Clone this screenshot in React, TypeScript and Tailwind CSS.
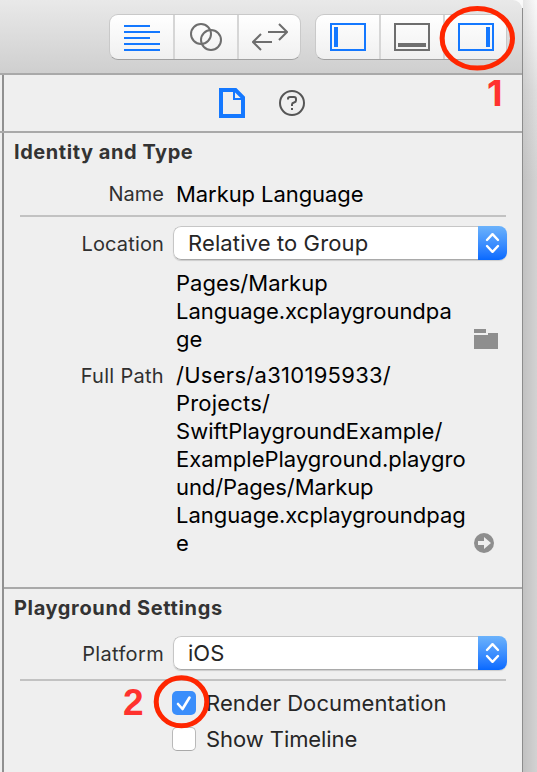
import React from "react";

function Popup({ children }: { children: React.ReactNode }) {
  return (
    <div className="flex h-[34px] w-[334px] overflow-hidden rounded-[8px] shadow-[0_1px_1px_rgba(0,0,0,0.15)]">
      <div className="flex flex-1 items-center rounded-l-[8px] border border-r-0 border-[#c6c6c6] border-b-[#a9a9a9] bg-white pl-[14px] text-[22px] leading-[28px] text-[#262626]">
        {children}
      </div>
      <div className="flex w-[29px] items-center justify-center bg-linear-to-b from-[#6bb2fb] to-[#0669ff]">
        <svg width="29" height="34" viewBox="0 0 29 34" fill="none" stroke="white" strokeWidth="2.4" strokeLinecap="round" strokeLinejoin="round">
          <path d="M9 14 L14.5 8.2 L20 14 M9 20 L14.5 25.8 L20 20" />
        </svg>
      </div>
    </div>
  );
}

function Label({ children }: { children: React.ReactNode }) {
  return (
    <div className="w-[164px] shrink-0 text-right text-[20px] leading-[28px] text-[#303030]">
      {children}
    </div>
  );
}

const group =
  "flex h-[46px] w-[192px] divide-x-2 divide-[#d6d6d6] rounded-[9px] border border-[#c9c9c9] border-b-[#a0a0a0] bg-linear-to-b from-white to-[#f0f0f0]";
const first = "flex w-[65px] items-center justify-center pl-px";
const middle = "flex w-[64px] items-center justify-center";
const last = "flex w-[61px] items-center justify-center pl-px";

export default function App() {
  return (
    <div className="relative flex h-[772px] w-[537px] overflow-hidden bg-[#efefef] font-['Inter','Liberation_Sans',sans-serif] whitespace-nowrap">
      <div className="flex w-[522px] flex-col bg-[#fafafa]">
        <header className="flex h-[75px] shrink-0 rounded-tr-[9px] border-b-2 border-[#a9a9a9] bg-linear-to-b from-[#e9e9e9] to-[#cfcfcf] pt-[14px] pl-[109px]">
          <div className={group}>
            <div className={first}>
              <svg className="mt-[2px]" width="36" height="28" viewBox="0 0 36 28" fill="#1478ff">
                <path d="M0 1h26v2H0zM0 7h36v2H0zM0 13h26v2H0zM0 19h36v2H0zM0 25h36v2H0z" />
              </svg>
            </div>
            <div className={middle}>
              <svg width="32" height="28" viewBox="0 0 32 28" fill="none" stroke="#6e6e6e" strokeWidth="2">
                <circle cx="11" cy="11" r="10" />
                <circle cx="21" cy="17" r="10" />
              </svg>
            </div>
            <div className={last}>
              <svg width="36" height="28" viewBox="0 0 36 28" fill="none" stroke="#6e6e6e" strokeWidth="2">
                <path d="M16 9h19M27 1l8 8-8 8M20 19H1M9 11l-8 8 8 8" />
              </svg>
            </div>
          </div>
          <div className={"ml-[14px] " + group}>
            <div className={first}>
              <svg width="36" height="28" fill="none" stroke="#1478ff" strokeWidth="2">
                <path d="M1 1h34v26H1z" />
                <path d="M6 4v20" strokeWidth="4" />
              </svg>
            </div>
            <div className={middle}>
              <svg width="36" height="28" fill="none" stroke="#6e6e6e" strokeWidth="2">
                <path d="M1 1h34v26H1z" />
                <path d="M4 22h28" strokeWidth="4" />
              </svg>
            </div>
            <div className={last}>
              <svg width="36" height="28" fill="none" stroke="#1478ff" strokeWidth="2">
                <path d="M1 1h34v26H1z" />
                <path d="M30 4v20" strokeWidth="4" />
              </svg>
            </div>
          </div>
        </header>

        <main className="flex flex-1 flex-col border-l-2 border-[#efefef] bg-[#efefef]">
          <div className="flex flex-1 flex-col border-l-2 border-[#909090]">
            <nav className="-ml-[4px] flex h-[58px] shrink-0 border-b-2 border-[#a9a9a9] pt-[13px] pl-[219px]">
              <svg width="26" height="30" viewBox="0 0 26 30" fill="none" stroke="#1478ff">
                <path d="M2 2h14.5L24 9.5V28H2z" strokeWidth="4" />
                <path d="M15 4v7h7" strokeWidth="2" />
              </svg>
              <svg className="mt-[2px] ml-[34px]" width="26" height="26" viewBox="0 0 26 26" fill="none" stroke="#555" strokeWidth="2">
                <circle cx="13" cy="13" r="12" />
                <path d="M9 9.5V8.8Q9 7 11 7h4Q17 7 17 9v1.5Q17 12 15 12.5T13 14.5V16" />
                <path d="M13 18v2" />
              </svg>
            </nav>

            <section className="-ml-[4px] flex h-[454px] shrink-0 flex-col">
              <h2 className="mt-[5px] pl-[14px] text-[20px] leading-[28px] font-bold tracking-[0.55px] text-[#333]">
                Identity and Type
              </h2>
              <div className="mt-[14px] flex">
                <Label>Name</Label>
                <div className="ml-[12px] text-[22px] leading-[28px] tracking-[-0.07px]">Markup Language</div>
              </div>
              <div className="mt-[7px] ml-[20px] h-[2px] w-[486px] shrink-0 bg-[#c2c2c2]" />
              <div className="mt-[9px] flex items-center">
                <div className="pt-[2px]"><Label><span className="tracking-[0.15px]">Location</span></Label></div>
                <div className="ml-[9px]">
                  <Popup><span className="tracking-[0.12px]">Relative to Group</span></Popup>
                </div>
              </div>
              <div className="mt-[9px] flex pl-[176px] text-[22px] leading-[28px]">
                <div className="w-[298px]">
                  <div>Pages/Markup</div>
                  <div className="tracking-[-0.02px]">Language.xcplaygroundpa</div>
                  <div>ge</div>
                </div>
                <svg className="mt-[60px]" width="24" height="20" fill="#8e8e8e">
                  <path d="M0 0h12v4H0zM0 6h14V4h10v16H0z" />
                </svg>
              </div>
              <div className="mt-[8px] flex">
                <div className="pt-px"><Label><span className="tracking-[0.3px]">Full Path</span></Label></div>
                <div className="ml-[12px] w-[298px] text-[22px] leading-[28px]">
                  <div className="tracking-[0.28px]">/Users/a310195933/</div>
                  <div className="tracking-[0.2px]">Projects/</div>
                  <div className="tracking-[0.02px]">SwiftPlaygroundExample/</div>
                  <div>ExamplePlayground.playgro</div>
                  <div className="tracking-[-0.1px]">und/Pages/Markup</div>
                  <div>Language.xcplaygroundpag</div>
                  <div>e</div>
                </div>
                <svg className="mt-[172px]" width="20" height="20">
                  <circle cx="10" cy="10" r="10" fill="#8e8e8e" />
                  <path d="M4 8h6V4l7 6-7 6v-4H4z" fill="#efefef" />
                </svg>
              </div>
            </section>

            <section className="flex flex-1 flex-col border-t-2 border-[#a9a9a9]">
              <h2 className="mt-[5px] pl-[10px] text-[20px] leading-[28px] font-bold tracking-[0.63px] text-[#333]">
                Playground Settings
              </h2>
              <div className="mt-[14px] -ml-[4px] flex items-center">
                <div className="pt-[2px]"><Label><span className="tracking-[0.35px]">Platform</span></Label></div>
                <div className="ml-[9px]">
                  <Popup>iOS</Popup>
                </div>
              </div>
              <div className="mt-[9px] ml-[16px] h-[2px] w-[486px] shrink-0 bg-[#c2c2c2]" />
              <div className="mt-[8px] flex h-[28px] items-center pl-[168px] text-[22px] text-[#262626]">
                <svg className="mr-[10px]" width="24" height="24" fill="none">
                  <rect width="24" height="24" rx="5" fill="#3a8efb" />
                  <path d="M6 13l4.5 5L17.5 6.5" stroke="white" strokeWidth="2.6" strokeLinecap="round" strokeLinejoin="round" />
                </svg>
                <span className="tracking-[0.1px]">Render Documentation</span>
              </div>
              <div className="mt-[8px] flex h-[28px] items-center pl-[168px] text-[22px] text-[#262626]">
                <div className="mr-[10px] h-[24px] w-[24px] rounded-[5px] border border-[#b9b9b9] border-b-[#a9a9a9] bg-white" />
                <span className="tracking-[-0.07px]">Show Timeline</span>
              </div>
            </section>
          </div>
        </main>
      </div>
      <div className="flex w-[15px] bg-linear-to-b from-[#fafafa] via-[#dedede] via-[90px] to-[#d2d2d2] to-[180px]">
        <div className="mt-[8px] w-px bg-[#8c8c8c]" />
        <div className="flex-1 bg-linear-to-r from-black/8 to-transparent" />
      </div>

      <svg className="pointer-events-none absolute inset-0" width="537" height="772" fill="none" stroke="#ff2600" strokeWidth="5">
        <ellipse cx="477.3" cy="38.3" rx="35.2" ry="29.8" />
        <ellipse cx="181.5" cy="701.8" rx="25.3" ry="24" />
      </svg>
      <div className="absolute top-[72px] left-[487px] text-[36px] leading-[42px] font-bold text-[#ff322e]">1</div>
      <div className="absolute top-[682px] left-[123px] font-['Liberation_Sans',sans-serif] text-[37px] leading-[42px] font-bold text-[#ff322e]">2</div>
    </div>
  );
}
